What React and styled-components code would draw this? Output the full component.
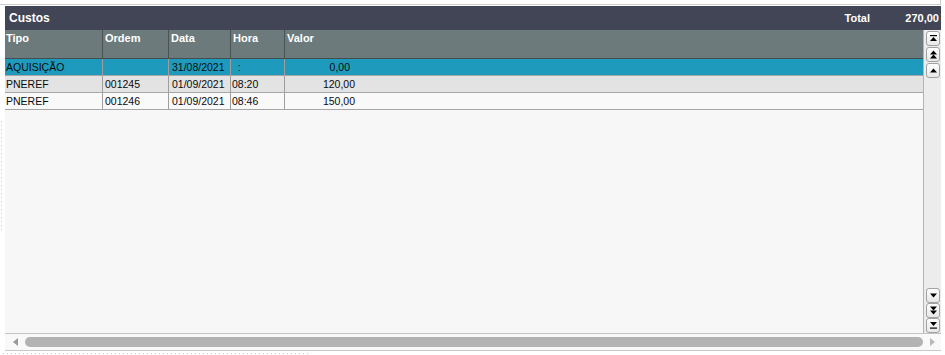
import React from "react";
import styled, { createGlobalStyle } from "styled-components";

const GlobalStyle = createGlobalStyle`
  html, body { margin: 0; padding: 0; background: #ffffff; }
  body { font-family: "Liberation Sans", Arial, sans-serif; }
  * { box-sizing: border-box; }
`;

const Page = styled.div`
  width: 945px;
  height: 355px;
  overflow: hidden;
  background: #ffffff;
`;

const TopEdge = styled.div`
  width: 941px;
  height: 5px;
  border-bottom: 1px solid #cdcdcd;
  border-right: 1px solid #cdcdcd;
`;

const Main = styled.div`
  display: flex;
  margin-top: 1px;
`;

const Gutter = styled.div`
  width: 5px;
  flex: none;
  display: flex;
  flex-direction: column;
`;

const GutterDots = styled.div`
  margin-top: 115px;
  margin-left: 1px;
  width: 1px;
  height: 112px;
  background-image: linear-gradient(to bottom, #c9c9c9 1px, transparent 1px);
  background-size: 1px 4px;
`;

const Panel = styled.div`
  width: 936px;
  flex: none;
  display: flex;
  flex-direction: column;
`;

const TitleBar = styled.div`
  height: 24px;
  background: #424555;
  display: flex;
  align-items: center;
  padding: 0 2px 0 4px;
  color: #ffffff;
  font-weight: bold;
`;

const Title = styled.span`
  font-size: 12px;
  flex: 1;
`;

const TotalLabel = styled.span`
  font-size: 11px;
`;

const TotalValue = styled.span`
  font-size: 11px;
  width: 69px;
  text-align: right;
`;

const Body = styled.div`
  height: 303px;
  display: flex;
`;

const Table = styled.div`
  width: 918px;
  flex: none;
  background: #f7f7f7;
  display: flex;
  flex-direction: column;
`;

const cols = "97px 66px 62px 54px 1fr";

const HeaderRow = styled.div`
  display: grid;
  grid-template-columns: ${cols};
  height: 29px;
  background: #6d7a7b;
  border-bottom: 1px solid #454c4d;
`;

const HeaderCell = styled.div`
  color: #ffffff;
  font-size: 11px;
  font-weight: bold;
  line-height: 13px;
  padding: 2px 0 0 ${(p) => p.$pad ?? 2}px;
  border-left: ${(p) => (p.$first ? "none" : "1px solid #4a5253")};
`;

const Row = styled.div`
  display: grid;
  grid-template-columns: ${cols};
  height: 17px;
  background: ${(p) => p.$bg};
  border-bottom: 1px solid #a6a6a6;
`;

const Cell = styled.div`
  font-size: 10.5px;
  line-height: 16px;
  color: #0a0a0a;
  white-space: nowrap;
  overflow: hidden;
  padding-left: ${(p) => p.$pad ?? 1}px;
  border-left: ${(p) => (p.$first ? "none" : "1px solid #9e9e9e")};
`;

const Amount = styled.span`
  display: inline-block;
  width: ${(p) => p.$w}px;
  text-align: right;
`;

const VScroll = styled.div`
  flex: 1;
  background: #ececec;
  border-left: 1px solid #b4b4b4;
  display: flex;
  flex-direction: column;
  justify-content: space-between;
  padding: 1px 0 0 2px;
`;

const BtnGroup = styled.div`
  display: flex;
  flex-direction: column;
  gap: ${(p) => p.$gap}px;
`;

const ScrollBtn = styled.div`
  width: 14px;
  height: 15px;
  border: 1px solid #a2a2a2;
  border-radius: 3px;
  background: linear-gradient(#ffffff, #e7e7e7);
  display: flex;
  align-items: center;
  justify-content: center;
`;

const HScroll = styled.div`
  height: 18px;
  border-top: 1px solid #c4c4c4;
  border-bottom: 1px solid #c8c8c8;
  background: #f9f9f9;
  display: flex;
  align-items: center;
`;

const HArrow = styled.div`
  width: ${(p) => p.$w}px;
  flex: none;
  display: flex;
  align-items: center;
  justify-content: center;
`;

const Thumb = styled.div`
  flex: 1;
  height: 10px;
  border-radius: 5px;
  background: #b3b3b3;
`;

const BottomDots = styled.div`
  margin: 2px 0 0 3px;
  width: 308px;
  height: 1px;
  background-image: linear-gradient(to right, #cbcbcb 1px, transparent 1px);
  background-size: 4px 1px;
`;

const Tri = ({ y, down }) =>
  down ? (
    <path d={`M0 ${y} L7 ${y} L3.5 ${y + 4} Z`} fill="#000" />
  ) : (
    <path d={`M3.5 ${y} L7 ${y + 4} L0 ${y + 4} Z`} fill="#000" />
  );

const IconTop = () => (
  <svg width="7" height="9" viewBox="0 0 7 9">
    <rect x="0" y="1" width="7" height="1.2" fill="#000" />
    <Tri y={3} />
  </svg>
);
const IconPageUp = () => (
  <svg width="7" height="9" viewBox="0 0 7 9">
    <Tri y={0.5} />
    <Tri y={4.5} />
  </svg>
);
const IconUp = () => (
  <svg width="7" height="5" viewBox="0 0 7 5">
    <Tri y={0.5} />
  </svg>
);
const IconDown = () => (
  <svg width="7" height="5" viewBox="0 0 7 5">
    <Tri y={0.5} down />
  </svg>
);
const IconPageDown = () => (
  <svg width="7" height="9" viewBox="0 0 7 9">
    <Tri y={0.5} down />
    <Tri y={4.5} down />
  </svg>
);
const IconBottom = () => (
  <svg width="7" height="9" viewBox="0 0 7 9">
    <Tri y={1} down />
    <rect x="0" y="6.5" width="7" height="1.2" fill="#000" />
  </svg>
);

const rows = [
  { tipo: "AQUISIÇÃO", ordem: "", data: "31/08/2021", hora: "\u00a0\u00a0:", valor: "0,00", bg: "#1e9bbc", w: 64 },
  { tipo: "PNEREF", ordem: "001245", data: "01/09/2021", hora: "08:20", valor: "120,00", bg: "#e3e3e3", w: 69 },
  { tipo: "PNEREF", ordem: "001246", data: "01/09/2021", hora: "08:46", valor: "150,00", bg: "#f9f9f9", w: 69 },
];

export default function App() {
  return (
    <Page>
      <GlobalStyle />
      <TopEdge />
      <Main>
        <Gutter>
          <GutterDots />
        </Gutter>
        <Panel>
          <TitleBar>
            <Title>Custos</Title>
            <TotalLabel>Total</TotalLabel>
            <TotalValue>270,00</TotalValue>
          </TitleBar>
          <Body>
            <Table>
              <HeaderRow>
                <HeaderCell $first $pad={1}>Tipo</HeaderCell>
                <HeaderCell>Ordem</HeaderCell>
                <HeaderCell>Data</HeaderCell>
                <HeaderCell>Hora</HeaderCell>
                <HeaderCell>Valor</HeaderCell>
              </HeaderRow>
              {rows.map((r, i) => (
                <Row key={i} $bg={r.bg}>
                  <Cell $first>{r.tipo}</Cell>
                  <Cell $pad={2}>{r.ordem}</Cell>
                  <Cell $pad={3}>{r.data}</Cell>
                  <Cell>{r.hora}</Cell>
                  <Cell>
                    <Amount $w={r.w}>{r.valor}</Amount>
                  </Cell>
                </Row>
              ))}
            </Table>
            <VScroll>
              <BtnGroup $gap={1}>
                <ScrollBtn><IconTop /></ScrollBtn>
                <ScrollBtn><IconPageUp /></ScrollBtn>
                <ScrollBtn><IconUp /></ScrollBtn>
              </BtnGroup>
              <BtnGroup $gap={0}>
                <ScrollBtn><IconDown /></ScrollBtn>
                <ScrollBtn><IconPageDown /></ScrollBtn>
                <ScrollBtn><IconBottom /></ScrollBtn>
              </BtnGroup>
            </VScroll>
          </Body>
          <HScroll>
            <HArrow $w={20}>
              <svg width="5" height="8" viewBox="0 0 5 8">
                <path d="M5 0 L5 8 L0 4 Z" fill="#9a9a9a" />
              </svg>
            </HArrow>
            <Thumb />
            <HArrow $w={18}>
              <svg width="5" height="8" viewBox="0 0 5 8">
                <path d="M0 0 L0 8 L5 4 Z" fill="#b8b8b8" />
              </svg>
            </HArrow>
          </HScroll>
        </Panel>
      </Main>
      <BottomDots />
    </Page>
  );
}
